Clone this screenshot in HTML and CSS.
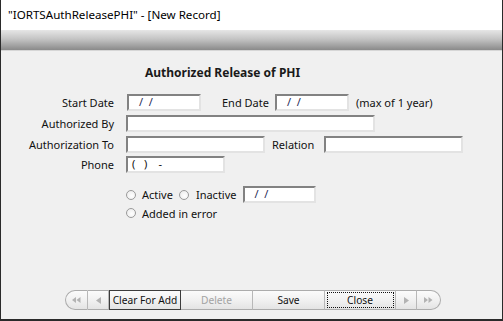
FILE: index.html
```html
<!DOCTYPE html>
<html>
<head>
<meta charset="utf-8">
<link rel="stylesheet" href="styles.css">
</head>
<body>
<div class="window">
  <div class="titlebar">"IORTSAuthReleasePHI" - [New Record]</div>
  <div class="band"></div>
  <div class="content">
    <div class="heading">Authorized Release of PHI</div>
    <div class="form">
      <div class="row">
        <span class="label">Start Date</span>
        <span class="field w74 date-start">/&nbsp;&nbsp;/</span>
        <span class="label-inline end-label">End Date</span>
        <span class="field w74">/&nbsp;&nbsp;/</span>
        <span class="note">(max of 1 year)</span>
      </div>
      <div class="row">
        <span class="label">Authorized By</span>
        <span class="field w249"></span>
      </div>
      <div class="row">
        <span class="label">Authorization To</span>
        <span class="field w139"></span>
        <span class="label-inline rel-label">Relation</span>
        <span class="field w139"></span>
      </div>
      <div class="row">
        <span class="label">Phone</span>
        <span class="field w99 phone">(&nbsp;&nbsp;&nbsp;)&nbsp;&nbsp;&nbsp;&nbsp;-</span>
      </div>
    </div>
    <div class="radios">
      <div class="radio-row">
        <span class="radio"></span><span class="rtext">Active</span>
        <span class="radio"></span><span class="rtext">Inactive</span>
        <span class="field w73">/&nbsp;&nbsp;/</span>
      </div>
      <div class="radio-row second">
        <span class="radio"></span><span class="rtext">Added in error</span>
      </div>
    </div>
    <div class="navbar">
      <span class="nbtn first w23"><svg width="9" height="6" viewBox="0 0 9 6"><path d="M0 3L4 0V6Z M4.5 3L8.5 0V6Z" fill="#b3b3b3"/></svg></span>
      <span class="nbtn w21"><svg width="5" height="7" viewBox="0 0 5 7"><path d="M0 3.5L5 0V7Z" fill="#b3b3b3"/></svg></span>
      <span class="nbtn w72 default">Clear For Add</span>
      <span class="nbtn w72 disabled">Delete</span>
      <span class="nbtn w72">Save</span>
      <span class="nbtn w71"><span class="focus">Close</span></span>
      <span class="nbtn w21"><svg width="5" height="7" viewBox="0 0 5 7"><path d="M5 3.5L0 0V7Z" fill="#b3b3b3"/></svg></span>
      <span class="nbtn last w24"><svg width="9" height="6" viewBox="0 0 9 6"><path d="M4 3L0 0V6Z M8.5 3L4.5 0V6Z" fill="#b3b3b3"/></svg></span>
    </div>
  </div>
</div>
</body>
</html>
```
FILE: styles.css
```css
html, body {
  margin: 0;
  padding: 0;
  background: #f0f0f0;
}
.window {
  width: 503px;
  height: 321px;
  box-sizing: border-box;
  border-left: 1px solid #2a2a2a;
  border-right: 1px solid #2a2a2a;
  border-bottom: 2px solid #2a2a2a;
  background: #f0f0f0;
  display: flex;
  flex-direction: column;
  font-family: "Noto Sans", "Open Sans", sans-serif;
  font-size: 11px;
  color: #111;
}
.titlebar {
  height: 30px;
  background: #fff;
  box-sizing: border-box;
  padding: 6px 0 0 7px;
  font-size: 11.6px;
  line-height: 17px;
  color: #000;
  white-space: nowrap;
}
.band {
  height: 20px;
  background: linear-gradient(#e6e6e6, #c4c4c4 45%, #8a8a8a);
  border-bottom: 1px solid #d6d6d6;
}
.content {
  flex: 1;
  display: flex;
  flex-direction: column;
}
.heading {
  margin-top: 14px;
  height: 16px;
  line-height: 16px;
  font-weight: bold;
  font-size: 12px;
  padding-left: 144px;
  color: #1a1a1a;
}
.form {
  margin-top: 13px;
  display: flex;
  flex-direction: column;
  gap: 4px;
}
.row {
  display: flex;
  align-items: center;
  height: 17px;
}
.row:last-child { margin-top: -1px; }
.label {
  width: 113px;
  text-align: right;
  margin-right: 12px;
  white-space: nowrap;
  line-height: 17px;
}
.label-inline {
  white-space: nowrap;
  line-height: 17px;
}
.end-label { margin-left: 21px; margin-right: 6px; }
.rel-label { margin-left: 7px; margin-right: 10px; }
.note { margin-left: 7px; white-space: nowrap; }
.field {
  box-sizing: border-box;
  height: 17px;
  background: #fff;
  border-top: 2px solid #828282;
  border-left: 2px solid #828282;
  border-bottom: 2px solid #e3e3e3;
  border-right: 2px solid #e3e3e3;
  font-size: 11px;
  line-height: 12px;
  color: #1f2a55;
  white-space: nowrap;
  padding-left: 10px;
}
.date-start { margin-left: 1px; }
.phone { padding-left: 4px; color: #111; }
.w73 { width: 73px; }
.w74 { width: 74px; }
.w99 { width: 99px; }
.w139 { width: 139px; }
.w249 { width: 249px; }
.radios {
  margin-top: 13px;
  padding-left: 125px;
  display: flex;
  flex-direction: column;
  gap: 2px;
}
.radio-row {
  display: flex;
  align-items: center;
  height: 17px;
}
.radio-row.second { height: 16px; }
.radio {
  width: 10px;
  height: 10px;
  box-sizing: border-box;
  border-radius: 50%;
  border: 1px solid #9a9a9a;
  background: radial-gradient(circle at 60% 60%, #ffffff, #e8e8e8);
  margin-right: 6px;
}
.rtext {
  margin-right: 6px;
  line-height: 17px;
  white-space: nowrap;
}
.rtext + .radio { margin-right: 7px; }
.navbar {
  margin-top: auto;
  margin-bottom: 9px;
  margin-left: 64px;
  display: flex;
  height: 20px;
}
.nbtn {
  box-sizing: border-box;
  height: 20px;
  display: flex;
  align-items: center;
  justify-content: center;
  background: linear-gradient(#fbfbfb, #f1f1f1 50%, #e4e4e4);
  border-top: 1px solid #acacac;
  border-bottom: 1px solid #acacac;
  border-right: 1px solid #b8b8b8;
  font-size: 10.2px;
  color: #111;
  white-space: nowrap;
}
.nbtn.first {
  border-left: 1px solid #acacac;
  border-radius: 10px 0 0 10px;
}
.nbtn.last {
  border-right: 1px solid #acacac;
  border-radius: 0 10px 10px 0;
}
.nbtn.default {
  border: 1px solid #3c3c3c;
}
.nbtn.disabled { color: #a3a3a3; }
.focus {
  box-sizing: border-box;
  width: 67px;
  height: 16px;
  border: 1px dotted #111;
  display: flex;
  align-items: center;
  justify-content: center;
}
.w21 { width: 21px; }
.w23 { width: 23px; }
.w24 { width: 24px; }
.w71 { width: 71px; }
.w72 { width: 72px; }
```
